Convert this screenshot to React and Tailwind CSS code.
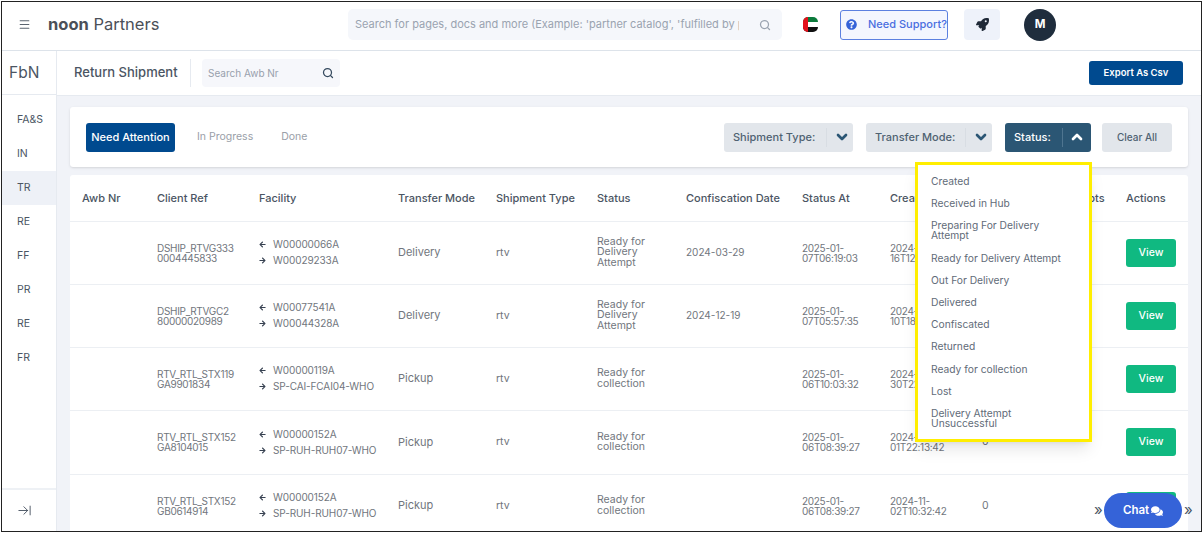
import { Search, ArrowRightToLine, ChevronDown, ChevronUp, Menu } from 'lucide-react';
import { FaArrowLeft, FaArrowRight, FaComments, FaQuestionCircle, FaRocket } from 'react-icons/fa';

const NAV = ['FA&S', 'IN', 'TR', 'RE', 'FF', 'PR', 'RE', 'FR'];

const STATUS_OPTIONS = [
  'Created',
  'Received in Hub',
  'Preparing For Delivery Attempt',
  'Ready for Delivery Attempt',
  'Out For Delivery',
  'Delivered',
  'Confiscated',
  'Returned',
  'Ready for collection',
  'Lost',
  'Delivery Attempt Unsuccessful',
];

const COLUMNS = [
  ['Awb Nr', 'w-[75px]'],
  ['Client Ref', 'w-[102px]'],
  ['Facility', 'w-[139px]'],
  ['Transfer Mode', 'w-[98px]'],
  ['Shipment Type', 'w-[101px]'],
  ['Status', 'w-[89px]'],
  ['Confiscation Date', 'w-[116px]'],
  ['Status At', 'w-[88px]'],
  ['Created At', 'w-[92px]'],
  ['Nr of Delivery Attempts', 'w-[144px]'],
  ['Actions', 'w-[74px]'],
];

const ROWS = [
  {
    ref: ['DSHIP_RTVG333', '0004445833'], from: 'W00000066A', to: 'W00029233A', mode: 'Delivery',
    status: ['Ready for', 'Delivery', 'Attempt'], confiscated: '2024-03-29',
    statusAt: ['2025-01-', '07T06:19:03'], created: ['2024-12-', '16T12:20:10'], h: 'h-[63px]',
  },
  {
    ref: ['DSHIP_RTVGC2', '80000020989'], from: 'W00077541A', to: 'W00044328A', mode: 'Delivery',
    status: ['Ready for', 'Delivery', 'Attempt'], confiscated: '2024-12-19',
    statusAt: ['2025-01-', '07T05:57:35'], created: ['2024-12-', '10T18:02:44'], h: 'h-[63px]',
  },
  {
    ref: ['RTV_RTL_STX119', 'GA9901834'], from: 'W00000119A', to: 'SP-CAI-FCAI04-WHO', mode: 'Pickup',
    status: ['Ready for', 'collection'], confiscated: '',
    statusAt: ['2025-01-', '06T10:03:32'], created: ['2024-11-', '30T22:41:08'], h: 'h-[63px]',
  },
  {
    ref: ['RTV_RTL_STX152', 'GA8104015'], from: 'W00000152A', to: 'SP-RUH-RUH07-WHO', mode: 'Pickup',
    status: ['Ready for', 'collection'], confiscated: '',
    statusAt: ['2025-01-', '06T08:39:27'], created: ['2024-11-', '01T22:13:42'], h: 'h-[64px]',
  },
  {
    ref: ['RTV_RTL_STX152', 'GB0614914'], from: 'W00000152A', to: 'SP-RUH-RUH07-WHO', mode: 'Pickup',
    status: ['Ready for', 'collection'], confiscated: '',
    statusAt: ['2025-01-', '06T08:39:27'], created: ['2024-11-', '02T10:32:42'], h: 'h-[63px]',
  },
];

function Lines({ items }) {
  return items.map(line => <span key={line} className="block leading-[10px]">{line}</span>);
}

function FilterButton({ label, active, width }) {
  return (
    <button className={`flex items-center h-[29px] rounded-[3px] pl-[9px] text-[11px] font-medium ${width} ${active ? 'bg-[#2b5674] text-white' : 'bg-[#e2e6eb] text-[#4f6272]'}`}>
      <span className="flex-1 text-left whitespace-nowrap">{label}</span>
      <span className={`flex items-center justify-center h-[19px] border-l ${active ? 'w-[29px] border-[#4f7590]' : 'w-[27px] pl-[3px] border-[#d8dde3]'}`}>
        {active
          ? <ChevronUp size={16} strokeWidth={4} className="text-white" />
          : <ChevronDown size={16} strokeWidth={4} className="text-[#2b5674]" />}
      </span>
    </button>
  );
}

export default function App() {
  return (
    <div className="w-[1204px] h-[534px] bg-white p-[1px] pr-[2px] pb-[2px] overflow-hidden text-[#71767d] [font-family:Inter,'Liberation_Sans',sans-serif]">
      <div className="relative flex flex-col h-full border border-[#222] overflow-hidden">

        {/* Top bar */}
        <header className="flex items-center h-[49px] pb-[3px] shrink-0 bg-white border-b border-[#dde3ea]">
          <Menu size={13} strokeWidth={2} className="ml-[16px] text-[#5b6470]" />
          <div className="ml-[17px] w-[300px] text-[16.5px] text-[#4b5058]">
            <span className="font-bold">noon</span> Partners
          </div>
          <div className="flex items-center w-[434px] h-[31px] bg-[#f5f7fb] rounded-[5px] pl-[7px] pr-[11px] text-[#9aa3b0] text-[11px]">
            <span className="flex-1 overflow-hidden whitespace-nowrap">Search for pages, docs and more (Example: 'partner catalog', 'fulfilled by p</span>
            <Search size={12} strokeWidth={2.5} className="ml-[20px] shrink-0 text-[#9aa3b0]" />
          </div>
          <svg width="15" height="15" viewBox="0 0 15 15" className="ml-[21px]">
            <clipPath id="flag"><rect width="15" height="15" rx="5" /></clipPath>
            <g clipPath="url(#flag)">
              <rect x="0" y="0" width="15" height="5" fill="#0b7a3b" />
              <rect x="0" y="5" width="15" height="5" fill="#ffffff" />
              <rect x="0" y="10" width="15" height="5" fill="#111111" />
              <rect x="0" y="0" width="5" height="15" fill="#e3111b" />
            </g>
          </svg>
          <div className="ml-[22px] flex items-center w-[108px] h-[30px] rounded-[3px] border border-[#5b80e0] bg-[#f3f6fe] pl-[5px] text-[#4a6ee0] text-[11px] font-medium">
            <FaQuestionCircle size={11} className="text-[#3563d8]" />
            <span className="ml-[11px] whitespace-nowrap">Need Support?</span>
          </div>
          <div className="ml-[16px] flex items-center justify-center w-[36px] h-[31px] rounded-[4px] bg-[#eef2fa]">
            <FaRocket size={13} className="text-[#1f2937]" />
          </div>
          <div className="ml-[24px] flex items-center justify-center w-[32px] h-[32px] rounded-full bg-[#1f2d3d] text-white text-[11.5px] font-bold">M</div>
        </header>

        <div className="flex flex-1 min-h-0">
          {/* Sidebar */}
          <aside className="flex flex-col w-[55px] shrink-0 bg-white border-r border-[#e6eaf0]">
            <div className="flex items-center h-[44px] pl-[7px] text-[15.5px] text-[#4b5563] border-b border-[#e6eaf0]">FbN</div>
            <nav className="flex-1 pt-[8px]">
              {NAV.map((item, i) => (
                <div key={i} className={`flex items-center h-[34px] pl-[15px] text-[10.5px] text-[#4b5563] ${item === 'TR' ? 'bg-[#eef1f7]' : ''}`}>{item}</div>
              ))}
            </nav>
            <div className="flex items-center h-[43px] pl-[15px] border-t-2 border-[#eef1f5]">
              <ArrowRightToLine size={15} strokeWidth={1.5} className="text-[#4b5563]" />
            </div>
          </aside>

          {/* Main */}
          <main className="flex flex-col flex-1 min-w-0 bg-[#f1f3f8]">
            <div className="flex items-center h-[45px] shrink-0 bg-white border-b border-[#e6eaf0] pl-[17px] pr-[18px]">
              <h1 className="w-[116px] text-[13px] font-medium text-[#4b5563] whitespace-nowrap">Return Shipment</h1>
              <div className="w-px h-[28px] bg-[#e6eaf0]" />
              <div className="ml-[11px] flex items-center justify-between w-[138px] h-[28px] rounded-[4px] bg-[#f6f7fb] pl-[6px] pr-[6px] text-[10px] text-[#98a0ac]">
                <span>Search Awb Nr</span>
                <Search size={12} strokeWidth={2.5} className="text-[#34495e]" />
              </div>
              <button className="ml-auto w-[94px] h-[24px] rounded-[3px] bg-[#004a8f] text-white text-[9.5px] font-semibold">Export As Csv</button>
            </div>

            <div className="flex-1 min-h-0 overflow-hidden px-[13px] pt-[11px]">
              {/* Tabs and filters */}
              <div className="flex items-center h-[60px] w-[1118px] bg-white rounded-[3px] shadow-sm pl-[16px] pr-[16px]">
                <button className="w-[89px] h-[29px] rounded-[3px] bg-[#004a8f] text-white text-[11px] font-medium">Need Attention</button>
                <span className="ml-[22px] text-[10.5px] text-[#9aa0a8]">In Progress</span>
                <span className="ml-[28px] text-[10.5px] text-[#9aa0a8]">Done</span>
                <div className="ml-auto flex items-center">
                  <FilterButton label="Shipment Type:" width="w-[129px]" />
                  <div className="w-[13px]" />
                  <FilterButton label="Transfer Mode:" width="w-[126px]" />
                  <div className="w-[13px]" />
                  <FilterButton label="Status:" active width="w-[86px]" />
                  <button className="ml-[11px] w-[70px] h-[29px] rounded-[3px] bg-[#e2e6eb] text-[#4f6272] text-[10px] font-medium">Clear All</button>
                </div>
              </div>

              {/* Table */}
              <div className="mt-[8px] w-[1118px] bg-white rounded-t-[3px]">
                <table className="w-[1118px] table-fixed border-collapse text-[10.5px]">
                  <thead>
                    <tr className="h-[46px] border-b border-[#eceff3]">
                      {COLUMNS.map(([name, width]) => (
                        <th key={name} className={`${width} pl-[12px] text-left text-[11px] font-medium text-[#4b5563] whitespace-nowrap overflow-visible`}>{name}</th>
                      ))}
                    </tr>
                  </thead>
                  <tbody>
                    {ROWS.map(row => (
                      <tr key={row.ref[1]} className={`${row.h} border-b border-[#eceff3]`}>
                        <td />
                        <td className="pl-[12px] text-[10px] tracking-[-0.3px]"><Lines items={row.ref} /></td>
                        <td className="pl-[12px] text-[10px] tracking-[-0.1px]">
                          <div className="flex items-center gap-[7px] leading-[13px]"><FaArrowLeft size={7} className="text-[#374151]" />{row.from}</div>
                          <div className="mt-[3px] flex items-center gap-[7px] leading-[13px] whitespace-nowrap"><FaArrowRight size={7} className="text-[#374151]" />{row.to}</div>
                        </td>
                        <td className="pl-[12px] text-[11px]">{row.mode}</td>
                        <td className="pl-[12px]">rtv</td>
                        <td className="pl-[12px]">{row.status.map(line => <span key={line} className="block leading-[10.5px]">{line}</span>)}</td>
                        <td className="pl-[12px] text-[10px]">{row.confiscated}</td>
                        <td className="pl-[12px] text-[10px] tracking-[-0.3px]"><Lines items={row.statusAt} /></td>
                        <td className="pl-[12px] text-[10px] tracking-[-0.3px]"><Lines items={row.created} /></td>
                        <td className="pl-[12px]">0</td>
                        <td className="pl-[12px]">
                          <button className="w-[50px] h-[28px] rounded-[3px] bg-[#10b981] text-white text-[10.5px] font-medium">View</button>
                        </td>
                      </tr>
                    ))}
                  </tbody>
                </table>
              </div>
            </div>
          </main>
        </div>

        {/* Status dropdown */}
        <ul className="absolute left-[913px] top-[160px] flex flex-col w-[177px] h-[280px] pl-[13px] pr-[10px] pt-[5px] bg-white border-[3px] border-[#ffee00] shadow-lg text-[10.25px] text-[#5f6b78]">
          {STATUS_OPTIONS.map(option => (
            <li key={option} className="py-[6.1px] leading-[10px]">{option}</li>
          ))}
        </ul>

        {/* Chat */}
        <span className="absolute left-[1092px] top-[497px] text-[15px] text-[#4b5563]">»</span>
        <span className="absolute left-[1182px] top-[497px] text-[15px] text-[#4b5563]">»</span>
        <button className="absolute left-[1102px] top-[491px] flex items-center justify-center gap-[2px] w-[78px] h-[35px] rounded-full bg-[#3563d8] text-white text-[11.5px] font-semibold">
          Chat <FaComments size={12} />
        </button>
      </div>
    </div>
  );
}
